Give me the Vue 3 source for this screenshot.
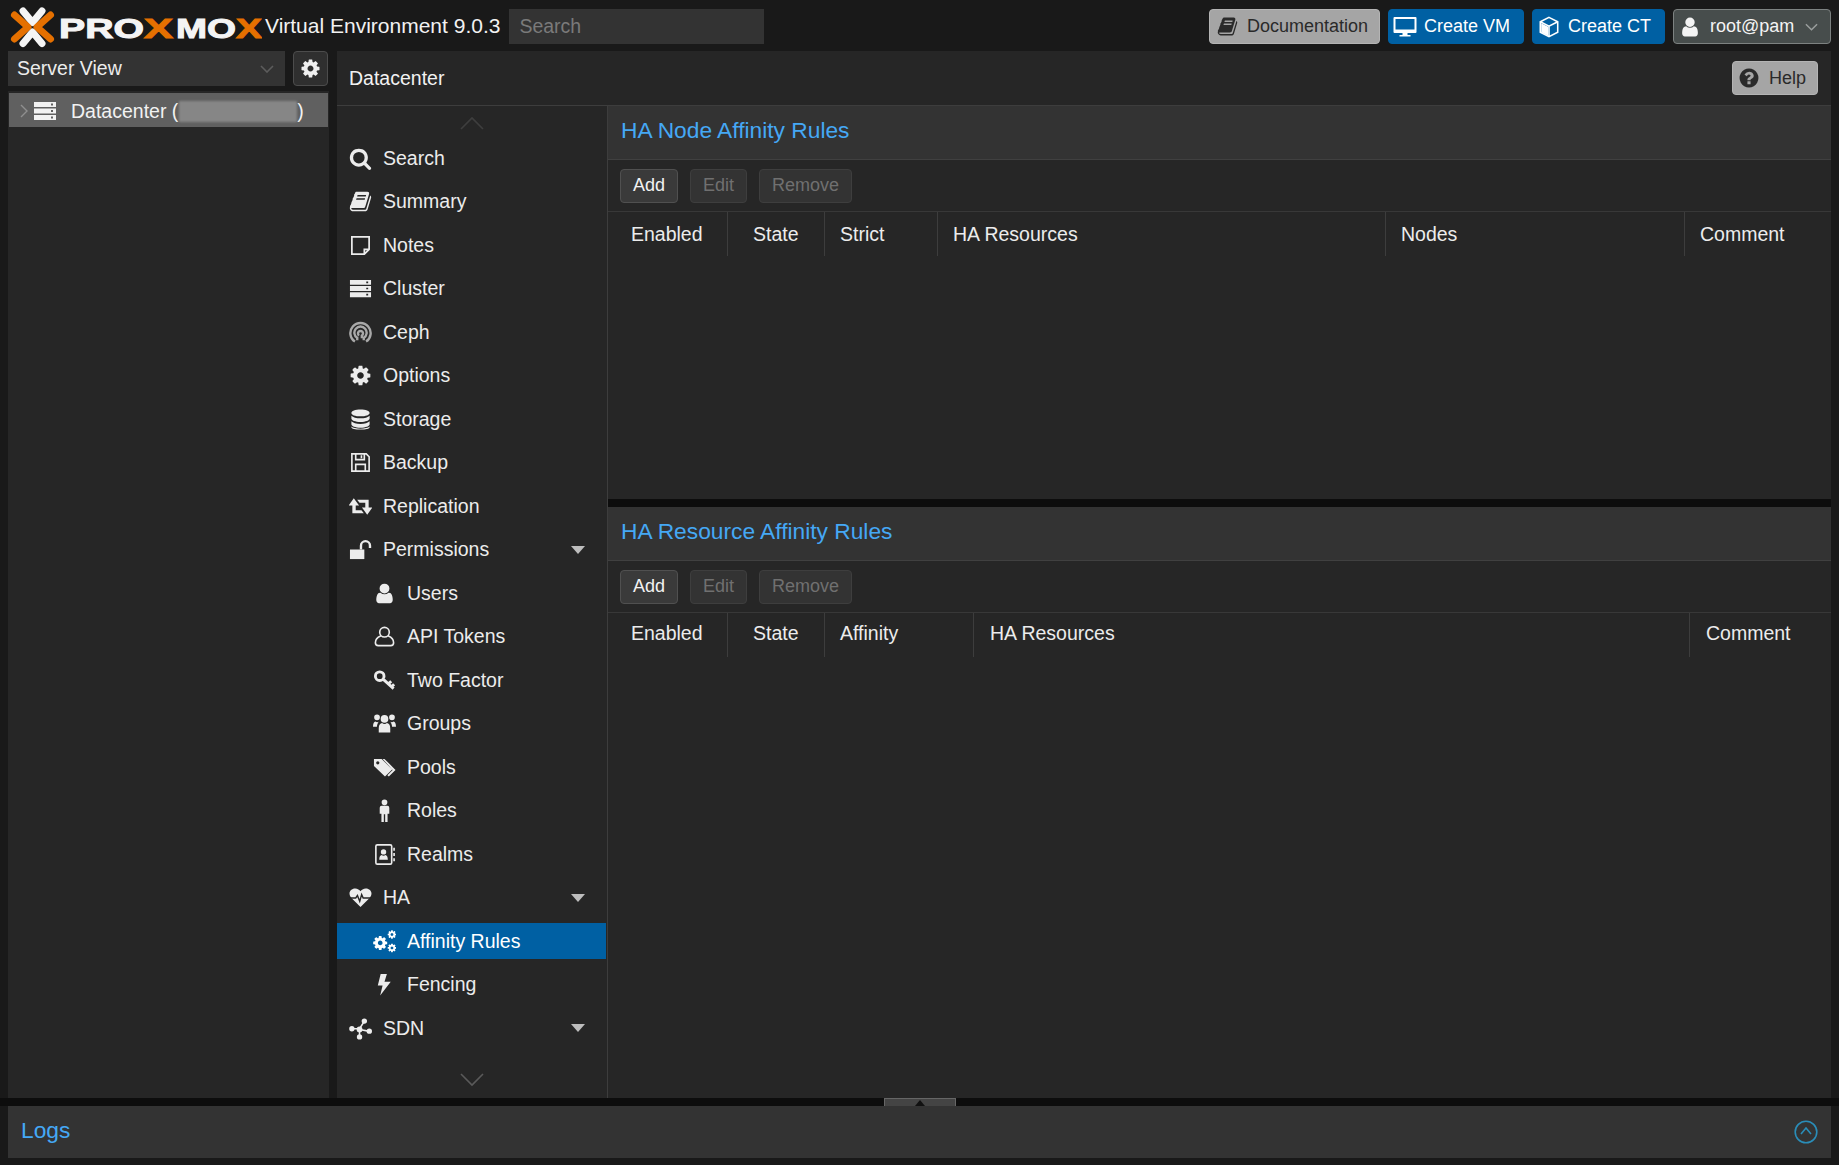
<script setup>
import { h } from 'vue'

const COG = 'M1152 896q0-106-75-181t-181-75-181 75-75 181 75 181 181 75 181-75 75-181zm512-109v222q0 12-8 23t-20 13l-185 28q-19 54-39 91 35 50 107 138 10 12 10 25t-9 23q-27 37-99 108t-94 71q-12 0-26-9l-138-108q-44 23-91 38-16 136-29 186-7 28-36 28h-222q-14 0-24.500-8.500t-11.500-21.500l-28-184q-49-16-90-37l-141 107q-10 9-25 9-14 0-25-11-126-114-165-168-7-10-7-23 0-12 8-23 15-21 51-66.500t54-70.500q-27-50-41-99l-183-27q-13-2-21-12.500t-8-23.500v-222q0-12 8-23t19-13l186-28q14-46 39-92-40-57-107-138-10-12-10-24 0-10 9-23 26-36 98.500-107.500t94.500-71.500q13 0 26 10l138 107q44-23 91-38 16-136 29-186 7-28 36-28h222q14 0 24.500 8.500t11.500 21.500l28 184q49 16 90 37l142-107q9-9 24-9 13 0 25 10 129 119 165 170 7 8 7 22 0 12-8 23-15 21-51 66.500t-54 70.500q26 50 41 98l183 28q13 2 21 12.500t8 23.500z'
const FA = '0 0 1792 1792'

const icons = {
  search: { vb: FA, d: 'M1216 832q0-185-131.500-316.500t-316.500-131.500-316.500 131.500-131.500 316.500 131.500 316.500 316.500 131.500 316.500-131.500 131.500-316.500zm512 832q0 52-38 90t-90 38q-54 0-90-38l-343-342q-179 124-399 124-143 0-273.500-55.500t-225-150-150-225-55.500-273.500 55.500-273.500 150-225 225-150 273.500-55.500 273.500 55.500 225 150 150 225 55.500 273.500q0 220-124 399l343 343q37 37 37 90z' },
  book: { vb: FA, d: 'M1703 478q40 57 18 129l-275 906q-19 64-76.500 107.500t-122.500 43.500h-923q-77 0-148.500-53.500t-99.500-131.500q-24-67-2-127 0-4 3-27t4-37q1-8-3-21.500t-3-19.500q2-11 8-21t16.500-23.500 16.500-23.500q23-38 45-91.500t30-91.500q3-10 .5-30t-.5-28q3-11 17-28t17-23q21-36 42-92t25-90q1-9-2.500-32t.5-28q4-13 22-30.500t22-22.500q19-26 42.500-84.500t27.500-96.500q1-8-3-25.500t-2-26.500q2-8 9-18t18-23 17-21q8-12 16.500-30.500t15-35 16-36 19.500-32 26.500-23.500 36-11.500 47.500 5.500l-1 3q38-9 51-9h761q74 0 114 56t18 130l-274 906q-36 119-71.500 153.500t-128.500 34.500h-869q-27 0-38 15-11 16-1 43 24 70 144 70h923q29 0 56-15.500t35-41.500l300-987q7-22 5-57 38 15 59 43zm-1064 2q-4 13 2 22.500t20 9.500h608q13 0 25.500-9.500t16.500-22.500l21-64q4-13-2-22.500t-20-9.500h-608q-13 0-25.500 9.500t-16.500 22.500zm-83 256q-4 13 2 22.500t20 9.500h608q13 0 25.500-9.500t16.500-22.500l21-64q4-13-2-22.500t-20-9.500h-608q-13 0-25.500 9.500t-16.500 22.500z' },
  note: { s: 'M3 3h18v13l-5 5H3zM21 16h-5v5', sw: 1.8 },
  server: { d: 'M1 3h22v5H1zM18 4.600h2v1.800h-2zM1 9.500h22v5H1zM18 11.100h2v1.800h-2zM1 16h22v5H1zM18 17.600h2v1.800h-2z' },
  ceph: { s: 'M6.200 21.500A10.600 10.600 0 1 1 17.800 21.500M8.600 20V17.600A6.400 6.400 0 1 1 15.400 17.600V20M10.600 15.200A2.600 2.600 0 1 1 13.400 15.200V18', sw: 2.5 },
  cog: { vb: FA, d: COG },
  database: { d: 'M12 1.500c5.500 0 9.500 1.600 9.500 3.600S17.500 8.700 12 8.700 2.500 7.100 2.500 5.100 6.500 1.500 12 1.500zM2.500 8c1.500 1.700 5.300 2.700 9.500 2.700S20 9.700 21.500 8v3c0 2-4 3.600-9.500 3.600S2.500 13 2.500 11zM2.500 13.900c1.500 1.700 5.300 2.700 9.500 2.700s8-1 9.500-2.700v3c0 2-4 3.600-9.500 3.600s-9.500-1.600-9.500-3.600zM2.500 19.400c1.500 1.400 5.300 2.200 9.500 2.200s8-.8 9.500-2.200v.6c0 1.500-4 2.500-9.500 2.500S2.500 21.500 2.500 20z' },
  floppy: { s: 'M3 3h15l3 3v15H3zM7 3v6h9V3M7 21v-7h10v7M13 4.500v3', sw: 1.7 },
  retweet: { d: 'M5 3.500L10.500 11H7v5h6l2.500 3H3.500V11H-.5zM19 20.500L13.500 13H17V8h-6L8.500 5h12v8h4z' },
  unlock: { d: 'M1 12h15v10H1z', s: 'M12.500 12V8a4.700 4.700 0 0 1 9.400 0v2.500', sw: 2.5 },
  user: { vb: FA, d: 'M1536 1399q0 109-62.500 187t-150.500 78h-854q-88 0-150.500-78t-62.500-187q0-85 8.500-160.500t31.500-152 58.500-131 94-89 134.500-34.500q131 128 313 128t313-128q76 0 134.500 34.500t94 89 58.500 131 31.500 152 8.500 160.500zm-256-887q0 159-112.500 271.500t-271.500 112.500-271.500-112.500-112.500-271.500 112.500-271.500 271.500-112.500 271.500 112.500 112.500 271.500z' },
  userO: { s: 'M12 2.500a5 5 0 1 1 0 10 5 5 0 0 1 0-10zM8 11.500C4 13 2.500 16 2.500 18.500a3 3 0 0 0 3 3h13a3 3 0 0 0 3-3c0-2.500-1.500-5.500-5.500-7', sw: 1.7 },
  key: { s: 'M7 3a4.500 4.500 0 1 1 0 9 4.500 4.500 0 0 1 0-9zM10.500 10.500l11 10M16 15.500l3-2.700M19.500 18.500l2.500-2.500', sw: 3 },
  users: { nz: true, d: 'M12 3.200a4 4 0 1 1 0 8 4 4 0 0 1 0-8zM4.200 2.500a3 3 0 1 1 0 6 3 3 0 0 1 0-6zM19.800 2.500a3 3 0 1 1 0 6 3 3 0 0 1 0-6zM6 21.500V17c0-3.300 1.500-5 3.500-5.400.7.700 1.500 1 2.500 1s1.800-.3 2.500-1c2 .4 3.500 2.100 3.500 5.400v4.500zM0 15.500c0-3.500 1-5.500 2.500-5.700 1 .8 2 1 3.300.5-.6 1.200-1.500 2.500-1.700 5.200zM24 15.500c0-3.500-1-5.500-2.500-5.700-1 .8-2 1-3.300.5.600 1.200 1.500 2.500 1.700 5.200z' },
  tags: { d: 'M1 3h8l11 11-7.500 7.500L1 10.500zM5 5.400a1.700 1.700 0 1 0 0 3.400 1.700 1.700 0 0 0 0-3.400zM12 3l11.500 11.500-7 7-1.500-1.500 5.500-5.500L10 3z' },
  male: { d: 'M12 .5a3 3 0 1 1 0 6 3 3 0 0 1 0-6zM7 9a2 2 0 0 1 2-2h6a2 2 0 0 1 2 2v6.500h-1.800V24h-2.500v-8h-1.400v8H8.800v-8.500H7z' },
  addressBook: { d: 'M11 6.500a2.800 2.800 0 1 1 0 5.600 2.800 2.800 0 0 1 0-5.600zM6.500 17.500c0-3.200 1.200-4.700 2.500-5 .6.500 1.200.7 2 .7s1.400-.2 2-.7c1.300.3 2.500 1.800 2.500 5z', s: 'M4.500 2h13.500a1.500 1.500 0 0 1 1.500 1.500v17a1.500 1.500 0 0 1-1.500 1.500H4.500A1.500 1.500 0 0 1 3 20.500v-17A1.500 1.500 0 0 1 4.500 2zM22 5v3M22 10.500v3M22 16v3', sw: 1.7 },
  heartbeat: { d: 'M12 22L2.500 12.500C-1.500 8 1 2.500 6.500 2.500 9 2.500 11 4 12 5.500 13 4 15 2.500 17.500 2.500c5.500 0 8 5.500 4 10z', cut: 'M0 12.500h7l1.800-2.500 2.400 6 2-7 1.600 3.500H24', sw: 1.5 },
  cogs: { gears: ['translate(-1 5) scale(.0095)', 'translate(14.600 -.5) scale(.0058)', 'translate(14.600 13.500) scale(.0058)'] },
  bolt: { d: 'M14.500 1H8L5 13h5L7.500 23.500 18.500 9H12z' },
  sdn: { nz: true, d: 'M11 10a3 3 0 1 1 0 6 3 3 0 0 1 0-6zM3 9.500a2.800 2.800 0 1 1 0 5.600 2.800 2.800 0 0 1 0-5.600zM16 1.500a2.800 2.800 0 1 1 0 5.600 2.800 2.800 0 0 1 0-5.600zM21.200 12a2.800 2.800 0 1 1 0 5.600 2.800 2.800 0 0 1 0-5.600zM11 18a2.800 2.800 0 1 1 0 5.600 2.800 2.800 0 0 1 0-5.600z', s: 'M3 12.200h8L16 4.400M11 13l10.500 2M11 13v8', sw: 1.6 },
  desktop: { d: 'M1.500 2h21a1 1 0 0 1 1 1v14a1 1 0 0 1-1 1h-8v2h3v1.500H6.500V20h3v-2h-8a1 1 0 0 1-1-1V3a1 1 0 0 1 1-1zM2.500 4v10.500h19V4z' },
  cube: { d: 'M3.500 8l7.500 3.700v9.800l-7.500-3.800z', s: 'M12 1.500l9.500 4.700v11.600L12 22.500l-9.500-4.700V6.200zM2.500 6.200L12 11l9.500-4.800M12 11v11.500', sw: 1.7 },
  help: { vb: FA, d: 'M1024 1376v-192q0-14-9-23t-23-9h-192q-14 0-23 9t-9 23v192q0 14 9 23t23 9h192q14 0 23-9t9-23zm256-672q0-88-55.500-163t-138.500-116-170-41q-243 0-371 213-15 24 8 42l132 100q7 6 19 6 16 0 25-12 53-68 86-92 34-24 86-24 48 0 85.500 26t37.500 59q0 38-20 61t-68 45q-63 28-115.500 86.500t-52.500 125.500v36q0 14 9 23t23 9h192q14 0 23-9t9-23q0-19 21.500-49.500t54.500-49.500q32-18 49-28.500t46-35 44.500-48 28-60.500 12.500-81zm384 192q0 209-103 385.500t-279.500 279.500-385.500 103-385.500-103-279.500-279.500-103-385.500 103-385.500 279.500-279.500 385.500-103 385.500 103 279.500 279.500 103 385.500z' },
}

// small inline icon, fills with currentColor
const Ico = props => {
  const i = icons[props.name]
  const kids = []
  if (i.d) kids.push(h('path', { d: i.d, fill: 'currentColor', 'fill-rule': i.nz ? 'nonzero' : 'evenodd' }))
  if (i.s) kids.push(h('path', { d: i.s, fill: 'none', stroke: 'currentColor', 'stroke-width': i.sw }))
  if (i.cut) kids.push(h('path', { d: i.cut, fill: 'none', stroke: '#262626', 'stroke-width': i.sw }))
  if (i.gears) i.gears.forEach(t => kids.push(h('path', { d: COG, fill: 'currentColor', transform: t })))
  return h('svg', { viewBox: i.vb || '0 0 24 24' }, kids)
}
Ico.props = ['name']

const menu = [
  { label: 'Search', icon: 'search' },
  { label: 'Summary', icon: 'book' },
  { label: 'Notes', icon: 'note' },
  { label: 'Cluster', icon: 'server' },
  { label: 'Ceph', icon: 'ceph' },
  { label: 'Options', icon: 'cog' },
  { label: 'Storage', icon: 'database' },
  { label: 'Backup', icon: 'floppy' },
  { label: 'Replication', icon: 'retweet' },
  { label: 'Permissions', icon: 'unlock', group: true },
  { label: 'Users', icon: 'user', sub: true },
  { label: 'API Tokens', icon: 'userO', sub: true },
  { label: 'Two Factor', icon: 'key', sub: true },
  { label: 'Groups', icon: 'users', sub: true },
  { label: 'Pools', icon: 'tags', sub: true },
  { label: 'Roles', icon: 'male', sub: true },
  { label: 'Realms', icon: 'addressBook', sub: true },
  { label: 'HA', icon: 'heartbeat', group: true },
  { label: 'Affinity Rules', icon: 'cogs', sub: true, active: true },
  { label: 'Fencing', icon: 'bolt', sub: true },
  { label: 'SDN', icon: 'sdn', group: true },
]

const panels = [
  {
    title: 'HA Node Affinity Rules',
    size: 'first',
    columns: [
      { label: 'Enabled', width: '120px', left: 23 },
      { label: 'State', width: '97px', left: 25 },
      { label: 'Strict', width: '113px', left: 15 },
      { label: 'HA Resources', width: '448px', left: 15 },
      { label: 'Nodes', width: '299px', left: 15 },
      { label: 'Comment', width: '1fr', left: 15 },
    ],
  },
  {
    title: 'HA Resource Affinity Rules',
    size: 'second',
    columns: [
      { label: 'Enabled', width: '120px', left: 23 },
      { label: 'State', width: '97px', left: 25 },
      { label: 'Affinity', width: '149px', left: 15 },
      { label: 'HA Resources', width: '716px', left: 16 },
      { label: 'Comment', width: '1fr', left: 16 },
    ],
  },
]
</script>

<template>
  <div class="app">
    <header class="topbar">
      <svg class="logo" viewBox="0 0 262 50">
        <path class="logo-white" d="M23 9l9.500 11.500L42 9M23 41.500L32.500 30 42 41.500" />
        <path class="logo-orange" d="M14.500 13l13.500 12-13.500 12M50.500 13L37 25l13.500 12" />
        <g class="logo-text">
          <text x="59" y="36" textLength="85" lengthAdjust="spacingAndGlyphs">PRO</text>
          <text class="logo-x" x="144" y="36" textLength="29" lengthAdjust="spacingAndGlyphs">X</text>
          <text x="176" y="36" textLength="60" lengthAdjust="spacingAndGlyphs">MO</text>
          <text class="logo-x" x="236" y="36" textLength="26" lengthAdjust="spacingAndGlyphs">X</text>
        </g>
      </svg>
      <span class="version">Virtual Environment 9.0.3</span>
      <div class="search">Search</div>
      <div class="top-actions">
        <button class="btn btn-grey doc-btn"><Ico name="book" class="ico-doc" />Documentation</button>
        <button class="btn btn-blue vm-btn"><Ico name="desktop" class="ico-vm" />Create VM</button>
        <button class="btn btn-blue ct-btn"><Ico name="cube" class="ico-ct" />Create CT</button>
        <button class="btn btn-user">
          <Ico name="user" class="ico-user" />root@pam
          <svg class="chev chev-user" viewBox="0 0 14 8"><path d="M1 1l6 6 6-6" /></svg>
        </button>
      </div>
    </header>

    <div class="main">
      <aside class="left">
        <div class="left-top">
          <div class="view-select">
            Server View
            <svg class="chev chev-select" viewBox="0 0 14 8"><path d="M1 1l6 6 6-6" /></svg>
          </div>
          <button class="gear-btn"><Ico name="cog" class="ico-gear" /></button>
        </div>
        <div class="tree">
          <div class="tree-row">
            <svg class="tree-toggle" viewBox="0 0 8 14"><path d="M1 1l6 6-6 6" /></svg>
            <Ico name="server" class="ico-tree" />
            <span>Datacenter (</span><span class="blurred"></span><span>)</span>
          </div>
        </div>
      </aside>

      <section class="center">
        <div class="center-head">
          <span>Datacenter</span>
          <button class="btn btn-grey help-btn"><Ico name="help" class="ico-help" />Help</button>
        </div>
        <div class="center-body">
          <nav class="menu">
            <div class="scroll-up">
              <svg viewBox="0 0 24 14"><path d="M1 13L12 2l11 11" /></svg>
            </div>
            <div class="menu-list">
              <div
                v-for="item in menu"
                :key="item.label"
                :class="['menu-item', { 'menu-sub': item.sub, 'menu-active': item.active }]"
              >
                <span class="menu-ico" :class="{ 'ico-dim': item.icon === 'ceph' }"><Ico :name="item.icon" /></span>
                <span>{{ item.label }}</span>
                <span v-if="item.group" class="menu-arrow"></span>
              </div>
            </div>
            <div class="scroll-down">
              <svg viewBox="0 0 24 14"><path d="M1 1l11 11L23 1" /></svg>
            </div>
          </nav>

          <div class="content">
            <div v-for="panel in panels" :key="panel.title" :class="['panel', panel.size]">
              <div class="panel-title">{{ panel.title }}</div>
              <div class="toolbar">
                <button class="tbtn">Add</button>
                <button class="tbtn tbtn-off">Edit</button>
                <button class="tbtn tbtn-off">Remove</button>
              </div>
              <div class="grid-head" :style="{ gridTemplateColumns: panel.columns.map(c => c.width).join(' ') }">
                <div
                  v-for="col in panel.columns"
                  :key="col.label"
                  class="grid-col"
                  :style="{ paddingLeft: col.left + 'px' }"
                >{{ col.label }}</div>
              </div>
            </div>
          </div>
        </div>
      </section>
    </div>

    <div class="split">
      <div class="split-handle"><span></span></div>
    </div>
    <footer class="logs">
      <span>Logs</span>
      <svg class="logs-toggle" viewBox="0 0 24 24">
        <circle cx="12" cy="12" r="10.8" />
        <path d="M7 14l5-6 5 6" />
      </svg>
    </footer>
  </div>
</template>

<style>
html,
body {
  margin: 0;
  background: #191919;
}
</style>

<style scoped>
.app {
  display: flex;
  flex-direction: column;
  height: 1165px;
  background: #191919;
  color: #ececec;
  font-family: "Liberation Sans", Arial, sans-serif;
  font-size: 19.5px;
  overflow: hidden;
}
button {
  font-family: inherit;
  cursor: pointer;
}
svg {
  display: block;
}

/* top bar */
.topbar {
  display: flex;
  align-items: center;
  height: 53px;
  flex: none;
  padding: 0 8px 0 0;
  box-sizing: border-box;
  margin-bottom: -2px;
}
.logo {
  width: 262px;
  height: 50px;
  flex: none;
}
.logo-white {
  fill: none;
  stroke: #f4f4f4;
  stroke-width: 7;
  stroke-linecap: round;
  stroke-linejoin: round;
}
.logo-orange {
  fill: none;
  stroke: #e57000;
  stroke-width: 7;
  stroke-linecap: round;
  stroke-linejoin: round;
}
.logo-text text {
  font-family: "Liberation Sans", Arial, sans-serif;
  font-weight: 700;
  font-size: 28px;
  fill: #f4f4f4;
  stroke: #f4f4f4;
  stroke-width: 1;
}
.logo-text .logo-x {
  fill: #e57000;
  stroke: #e57000;
}
.version {
  margin-left: 3px;
  font-size: 21px;
  color: #f2f2f2;
  white-space: nowrap;
  padding-bottom: 2px;
}
.search {
  width: 255px;
  height: 35px;
  margin-left: 9px;
  padding-left: 10px;
  box-sizing: border-box;
  display: flex;
  align-items: center;
  background: #333;
  color: #7a7a7a;
}
.top-actions {
  margin-left: auto;
  display: flex;
  gap: 8px;
}
.btn {
  display: flex;
  align-items: center;
  height: 35px;
  padding: 0;
  box-sizing: border-box;
  border-radius: 4px;
  font-size: 18px;
  white-space: nowrap;
}
.btn-grey {
  background: #a5a5a5;
  border: 1px solid #b4b4b4;
  color: #2a2a2a;
}
.btn-blue {
  background: #0060a3;
  border: 1px solid #0060a3;
  color: #fff;
}
.btn-user {
  width: 158px;
  background: #474d4c;
  border: 1px solid #7d8281;
  color: #f4f4f4;
}
.doc-btn {
  width: 171px;
}
.vm-btn {
  width: 136px;
}
.ct-btn {
  width: 133px;
}
.ico-doc {
  width: 21px;
  height: 21px;
  margin: 0 9px 0 7px;
  flex: none;
}
.ico-vm {
  width: 24px;
  height: 24px;
  margin: 0 7px 0 4px;
  flex: none;
}
.ico-ct {
  width: 22px;
  height: 22px;
  margin: 0 8px 0 5px;
  flex: none;
}
.ico-user {
  width: 22px;
  height: 22px;
  margin: 0 9px 0 5px;
  flex: none;
}
.chev {
  fill: none;
}
.chev path {
  stroke-width: 1.6;
  fill: none;
}
.chev-user {
  width: 13px;
  height: 8px;
  margin-left: auto;
  margin-right: 12px;
}
.chev-user path {
  stroke: #9a9e9d;
}

/* main area */
.main {
  display: flex;
  gap: 8px;
  height: 1047px;
  flex: none;
  padding: 0 8px;
  box-sizing: border-box;
}
.left {
  width: 321px;
  flex: none;
  display: flex;
  flex-direction: column;
}
.left-top {
  display: flex;
  gap: 8px;
  height: 35px;
  flex: none;
  padding-right: 1px;
}
.view-select {
  flex: 1;
  display: flex;
  align-items: center;
  padding-left: 9px;
  background: #333;
}
.chev-select {
  width: 14px;
  height: 8px;
  margin-left: auto;
  margin-right: 11px;
}
.chev-select path {
  stroke: #5c5c5c;
}
.gear-btn {
  width: 35px;
  flex: none;
  padding: 0;
  display: flex;
  align-items: center;
  justify-content: center;
  background: #2f2f2f;
  border: 1px solid #4c4c4c;
  border-radius: 4px;
  color: #f0f0f0;
}
.ico-gear {
  width: 21px;
  height: 21px;
}
.tree {
  flex: 1;
  margin-top: 5px;
  padding: 2px 1px 0;
  background: #262626;
}
.tree-row {
  display: flex;
  align-items: center;
  height: 34px;
  box-sizing: border-box;
  padding-top: 2px;
  background: #606060;
  color: #f2f2f2;
}
.tree-toggle {
  width: 8px;
  height: 14px;
  margin-left: 11px;
  flex: none;
}
.tree-toggle path {
  fill: none;
  stroke: #8f8f8f;
  stroke-width: 1.4;
}
.ico-tree {
  width: 24px;
  height: 24px;
  margin: 0 14px 0 5px;
  flex: none;
}
.blurred {
  width: 118px;
  height: 21px;
  margin-left: 1px;
  background: #868686;
  filter: blur(1px);
}

/* center */
.center {
  flex: 1;
  min-width: 0;
  display: flex;
  flex-direction: column;
  background: #262626;
}
.center-head {
  height: 55px;
  flex: none;
  display: flex;
  align-items: center;
  justify-content: space-between;
  padding: 0 13px 0 12px;
  box-sizing: border-box;
  border-bottom: 1px solid #3d3d3d;
  color: #f2f2f2;
}
.help-btn {
  width: 86px;
  height: 34px;
  font-size: 18px;
}
.ico-help {
  width: 22px;
  height: 22px;
  margin: 0 9px 0 5px;
  flex: none;
}
.center-body {
  flex: 1;
  min-height: 0;
  display: flex;
}
.menu {
  width: 271px;
  flex: none;
  box-sizing: border-box;
  padding-right: 1px;
  border-right: 1px solid #3d3d3d;
  display: flex;
  flex-direction: column;
}
.scroll-up {
  height: 34px;
  flex: none;
  display: flex;
  justify-content: center;
  padding-top: 10px;
  box-sizing: border-box;
}
.scroll-up svg,
.scroll-down svg {
  width: 24px;
  height: 14px;
  fill: none;
  stroke-width: 1.6;
}
.scroll-up svg {
  stroke: #3e3e3e;
}
.scroll-down svg {
  stroke: #5a5a5a;
}
.menu-list {
  display: flex;
  flex-direction: column;
  gap: 7.5px;
}
.menu-item {
  display: flex;
  align-items: center;
  height: 36px;
  flex: none;
  padding-left: 11px;
  color: #ececec;
}
.menu-sub {
  padding-left: 35px;
}
.menu-active {
  background: #0060a3;
  color: #fff;
}
.menu-ico {
  width: 24px;
  height: 24px;
  margin-right: 11px;
  display: flex;
  align-items: center;
  justify-content: center;
  flex: none;
}
.menu-ico svg {
  width: 23px;
  height: 23px;
}
.ico-dim {
  color: #a8a8a8;
}
.menu-arrow {
  margin-left: auto;
  margin-right: 21px;
  border-left: 7px solid transparent;
  border-right: 7px solid transparent;
  border-top: 8px solid #bdbdbd;
}
.scroll-down {
  margin-top: auto;
  padding-bottom: 11px;
  display: flex;
  justify-content: center;
}

/* content panels */
.content {
  flex: 1;
  min-width: 0;
  display: flex;
  flex-direction: column;
  gap: 8px;
  background: #0d0d0d;
}
.panel {
  background: #262626;
}
.first {
  height: 393px;
  flex: none;
}
.second {
  flex: 1;
}
.panel-title {
  height: 54px;
  box-sizing: border-box;
  display: flex;
  align-items: center;
  padding: 0 0 4px 13px;
  background: #333;
  border-bottom: 1px solid #404040;
  color: #45a8f5;
  font-size: 22.75px;
}
.toolbar {
  height: 52px;
  box-sizing: border-box;
  display: flex;
  align-items: center;
  gap: 12px;
  padding-left: 12px;
  border-bottom: 1px solid #383838;
}
.tbtn {
  height: 34px;
  padding: 0 12px;
  box-sizing: border-box;
  border-radius: 4px;
  background: #3a3a3a;
  border: 1px solid #505050;
  color: #f2f2f2;
  font-size: 18px;
}
.tbtn-off {
  background: #333;
  border-color: #3e3e3e;
  color: #707070;
}
.grid-head {
  display: grid;
  height: 44px;
}
.second .grid-col {
  padding-bottom: 3px;
}
.grid-col {
  display: flex;
  align-items: center;
  box-sizing: border-box;
  border-right: 1px solid #3d3d3d;
  color: #ececec;
  white-space: nowrap;
}
.grid-col:last-child {
  border-right: 0;
}

/* bottom */
.split {
  height: 8px;
  flex: none;
  background: #0d0d0d;
  position: relative;
}
.split-handle {
  position: absolute;
  left: 884px;
  top: 0;
  width: 72px;
  height: 8px;
  box-sizing: border-box;
  background: #444;
  border: 1px solid #666;
  border-bottom: 0;
  display: flex;
  justify-content: center;
}
.split-handle span {
  margin-top: 1px;
  border-left: 5px solid transparent;
  border-right: 5px solid transparent;
  border-bottom: 6px solid #111;
}
.logs {
  height: 52px;
  flex: none;
  margin: 0 8px 7px;
  display: flex;
  align-items: center;
  justify-content: space-between;
  padding: 0 13px 3px;
  box-sizing: border-box;
  background: #333;
  color: #45a8f5;
  font-size: 22.75px;
}
.logs-toggle {
  width: 24px;
  height: 24px;
  fill: none;
  stroke: #2a8db8;
  stroke-width: 1.6;
  margin-top: 3px;
}
</style>
